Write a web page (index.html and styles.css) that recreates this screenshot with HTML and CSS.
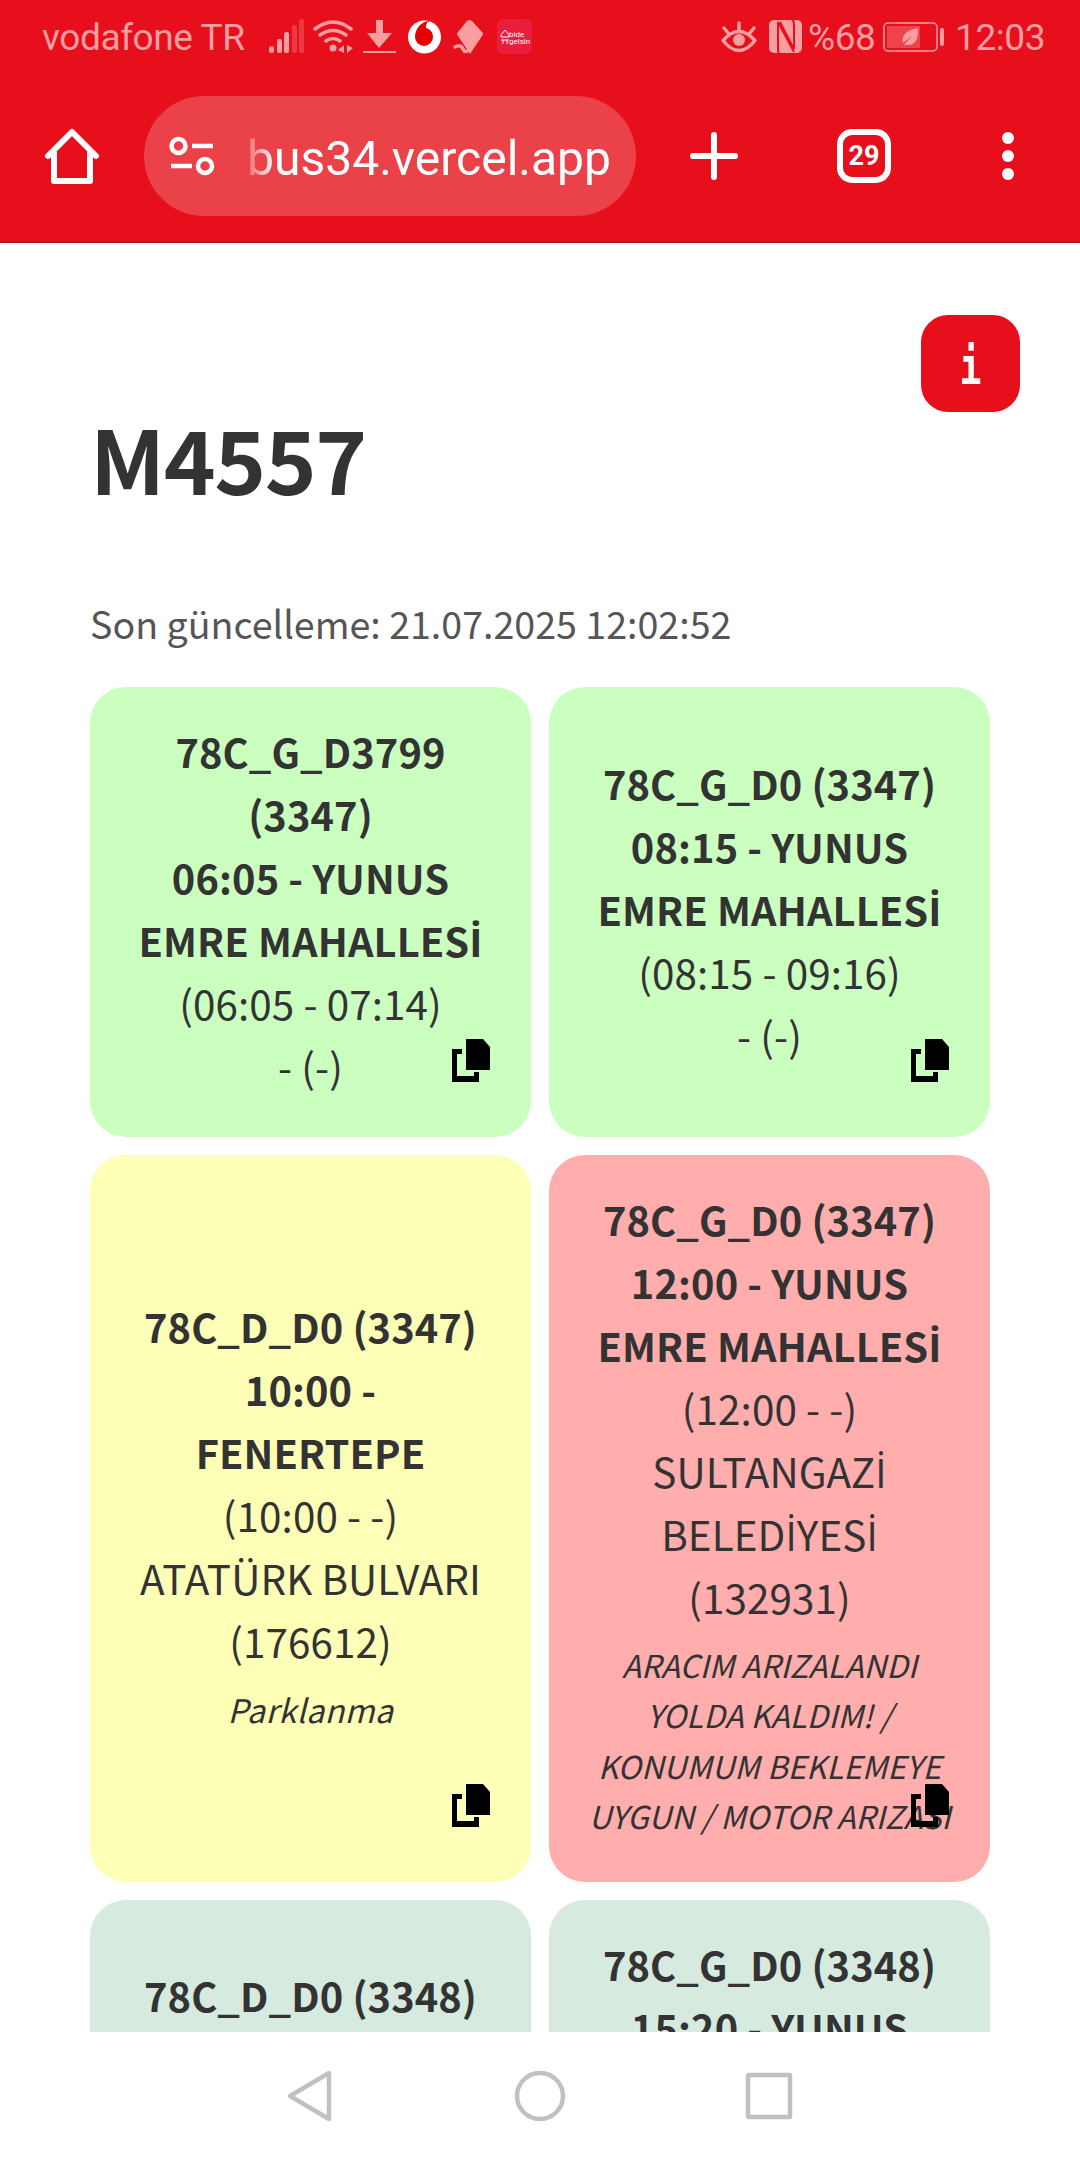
FILE: index.html
```html
<!DOCTYPE html>
<html lang="tr">
<head>
  <meta charset="UTF-8">
  <meta name="viewport" content="width=device-width, initial-scale=1.0">
  <title>M4557</title>
  <link rel="stylesheet" href="styles.css">
</head>
<body>
  <svg width="0" height="0" class="sprite">
    <symbol id="copy" viewBox="0 0 38 44">
      <path d="M14 0h17l7 8v23H14z"/>
      <path d="M0 10h10v5H5v22h17v-4h5v10H0z"/>
    </symbol>
  </svg>

  <div class="status-bar">
    <span class="carrier">vodafone TR</span>
    <svg class="status-icons" width="266" height="40" viewBox="266 17 266 40">
      <g fill="#f99ea1">
        <rect x="269" y="46" width="5" height="7" rx="2.5"/>
        <rect x="277" y="39" width="5" height="14" rx="2"/>
        <rect x="284" y="32" width="5" height="21" rx="2"/>
        <rect x="292" y="25" width="5" height="28" rx="2" opacity=".3"/>
        <rect x="299" y="19" width="5" height="34" rx="2" opacity=".3"/>
        <circle cx="333" cy="48" r="3.500"/>
        <path d="M344 45v8l-6-3zM347 45v8l6-5z"/>
        <path d="M376 20h7v13h9l-13 15-12-15h9z"/>
        <rect x="363" y="51" width="33" height="2"/>
        <path d="M469 20q2 0 3 1l10 11q2 2 0 4l-12 18-12-18q-2-2 0-4l9-11z"/>
      </g>
      <g fill="none" stroke="#f99ea1" stroke-width="3.500" stroke-linecap="round">
        <path d="M315 29q18-14 36 0M320 35q13-9 26 0M326 41q7-5 14 0"/>
        <path d="M455 47q6-3 8 2t8 0"/>
      </g>
      <circle cx="424.500" cy="37" r="16.500" fill="#fff"/>
      <path d="M430 21c-9 0-15 8-15 16a9 9 0 0 0 18 0c0-5-3-8-7-9 0-4 1-6 4-7z" fill="#e60000"/>
      <rect x="497" y="19" width="35" height="35" rx="6" fill="#ea1d3c"/>
      <text x="509" y="37" class="app-name">bide</text>
      <text x="509" y="44" class="app-name">gelsin</text>
      <path d="M501 35l4-5 4 5v2h-8zM501 40h8M503 40v4M507 40v4" fill="none" stroke="#fff"/>
    </svg>
    <svg class="right-icons" width="84" height="40" viewBox="720 17 84 40">
      <path d="M723 40.500q16-18 32 0-16 20-32 0zM739 31v-8M729 34l-5-6M749 34l5-6" fill="none" stroke="#f99ea1" stroke-width="3.500" stroke-linecap="round" stroke-linejoin="round"/>
      <circle cx="739" cy="40" r="6" fill="#f99ea1"/>
      <rect x="769" y="20" width="33" height="33" rx="5" fill="#f99ea1"/>
      <path d="M779 54q-1-2-1-5V22l16 30M792 19q2 2 2 6v24L780 22" fill="none" stroke="#e60f1b" stroke-width="2"/>
    </svg>
    <span class="percent">%68</span>
    <svg class="battery" width="62" height="32" viewBox="0 0 62 32">
      <rect x="1" y="2" width="53" height="28" rx="4" fill="none" stroke="#f99ea1" stroke-width="1.500"/>
      <rect x="4" y="5" width="33" height="22" fill="#ee434b"/>
      <path d="M35 7q1 17-10 17h-4l8-9-9 7q-2-6 4-11 4-3 11-4z" fill="#f99ea1"/>
      <rect x="57" y="7" width="4" height="18" rx="2" fill="#f99ea1"/>
    </svg>
    <span class="clock">12:03</span>
  </div>

  <div class="browser-bar">
    <svg class="home" width="56" height="60" viewBox="0 0 56 60" fill="none" stroke="#fff" stroke-width="6" stroke-linejoin="round" stroke-linecap="round">
      <path d="M4 30L28 6l24 24M10 27v28h36V27"/>
    </svg>
    <div class="address">
      <svg width="46" height="40" viewBox="0 0 46 40" fill="none" stroke="#fff" stroke-width="4.500">
        <circle cx="9.500" cy="10" r="7"/>
        <circle cx="36" cy="30" r="7"/>
        <path d="M23 10h21M2 30h21"/>
      </svg>
      <div class="url">bus34.vercel.app</div>
    </div>
    <svg class="plus" width="50" height="50" viewBox="0 0 50 50" stroke="#fff" stroke-width="6" stroke-linecap="round">
      <path d="M25 4v42M4 25h42"/>
    </svg>
    <div class="tabs">29</div>
    <svg class="more" width="12" height="50" viewBox="0 0 12 50" fill="#fff">
      <circle cx="6" cy="7" r="6"/>
      <circle cx="6" cy="25" r="6"/>
      <circle cx="6" cy="43" r="6"/>
    </svg>
  </div>

  <main class="page">
    <button class="info"><span>i</span></button>
    <h1>M4557</h1>
    <p class="updated">Son güncelleme: 21.07.2025 12:02:52</p>

    <div class="grid">
      <div class="card done">
        <b>78C_G_D3799<br>(3347)<br>06:05 - YUNUS<br>EMRE MAHALLES<span class="tr">İ</span></b>
        <span>(06:05 - 07:14)</span>
        <span>- (-)</span>
        <svg class="copy"><use href="#copy"/></svg>
      </div>
      <div class="card done">
        <b>78C_G_D0 (3347)<br>08:15 - YUNUS<br>EMRE MAHALLES<span class="tr">İ</span></b>
        <span>(08:15 - 09:16)</span>
        <span>- (-)</span>
        <svg class="copy"><use href="#copy"/></svg>
      </div>
      <div class="card active">
        <b>78C_D_D0 (3347)<br>10:00 -<br>FENERTEPE</b>
        <span>(10:00 - -)</span>
        <span>ATATÜRK BULVARI<br>(176612)</span>
        <i>Parklanma</i>
        <svg class="copy"><use href="#copy"/></svg>
      </div>
      <div class="card cancelled">
        <b>78C_G_D0 (3347)<br>12:00 - YUNUS<br>EMRE MAHALLES<span class="tr">İ</span></b>
        <span>(12:00 - -)</span>
        <span>SULTANGAZ<span class="tr">İ</span><br>BELED<span class="tr">İ</span>YES<span class="tr">İ</span><br>(132931)</span>
        <i>ARACIM ARIZALANDI<br>YOLDA KALDIM! /<br>KONUMUM BEKLEMEYE<br>UYGUN / MOTOR ARIZASI</i>
        <svg class="copy"><use href="#copy"/></svg>
      </div>
      <div class="card waiting">
        <b>78C_D_D0 (3348)</b>
      </div>
      <div class="card waiting">
        <b>78C_G_D0 (3348)<br>15:20 - YUNUS</b>
      </div>
    </div>
  </main>

  <nav class="nav-bar">
    <svg width="48" height="56" viewBox="0 0 48 56"><path d="M43 5v46L4 28z"/></svg>
    <svg width="54" height="54" viewBox="0 0 54 54"><circle cx="27" cy="27" r="23"/></svg>
    <svg width="48" height="50" viewBox="0 0 48 50"><rect x="3" y="4" width="42" height="42" rx="1"/></svg>
  </nav>
</body>
</html>
```
FILE: styles.css
```css
* {
  box-sizing: border-box;
}

body {
  margin: 0;
  height: 2160px;
  overflow: hidden;
  display: flex;
  flex-direction: column;
  background: #fff;
  color: #333;
  font-family: "Noto Sans CJK JP", "Noto Sans", sans-serif;
}

svg {
  display: block;
  flex: none;
}

.sprite {
  position: absolute;
}

.status-bar {
  height: 74px;
  flex: none;
  display: flex;
  align-items: center;
  padding-left: 42px;
  background: #e60f1b;
  color: #f99ea1;
  font: 37px/74px Roboto, sans-serif;
  letter-spacing: -0.4px;
}

.carrier {
  flex: none;
  width: 224px;
  padding-top: 2px;
  white-space: nowrap;
}

.app-name {
  font: 8px Roboto, sans-serif;
  letter-spacing: 0;
  fill: #fff;
}

.right-icons {
  margin-left: 188px;
}

.percent {
  flex: none;
  width: 79px;
  padding: 2px 0 0 4px;
}

.battery {
  margin-bottom: 1px;
}

.clock {
  margin-left: 10px;
  padding-top: 2px;
}

.browser-bar {
  height: 169px;
  flex: none;
  display: flex;
  align-items: center;
  padding: 0 0 3px 44px;
  background: #e60f1b;
  border-bottom: 2px solid #b5141c;
}

.address {
  width: 492px;
  height: 120px;
  margin-left: 44px;
  padding: 0 25px;
  display: flex;
  align-items: center;
  border-radius: 60px;
  background: #eb4149;
}

.url {
  flex: 1;
  margin-left: 24px;
  padding-top: 5px;
  color: #fff;
  font: 48px/70px Roboto, sans-serif;
  text-align: right;
  white-space: nowrap;
  -webkit-mask-image: linear-gradient(to right, transparent, #000 36px);
  mask-image: linear-gradient(to right, transparent, #000 36px);
}

.plus {
  margin-left: 53px;
}

.tabs {
  width: 54px;
  height: 54px;
  margin-left: 98px;
  border: 6px solid #fff;
  border-radius: 15px;
  color: #fff;
  font: bold 27px/43px Roboto, sans-serif;
  text-align: center;
}

.more {
  margin-left: 111px;
}

.page {
  flex: 1;
  min-height: 0;
  overflow: hidden;
  position: relative;
  padding: 0 90px;
}

.info {
  position: absolute;
  top: 72px;
  right: 60px;
  width: 99px;
  height: 97px;
  padding: 5px 0 0;
  border: 0;
  border-radius: 27px;
  background: #e60f1b;
  color: #fff;
  font: bold 52px/92px "DejaVu Sans Mono", monospace;
}

.info span {
  display: block;
  transform: scaleX(0.7);
}

h1 {
  margin: 160px 0 0;
  font-size: 88px;
  line-height: 108px;
  letter-spacing: -1.4px;
}

.updated {
  margin: 80px 0 0;
  color: #555;
  font-size: 37.6px;
  line-height: 63px;
}

.grid {
  margin-top: 33px;
  display: grid;
  grid-template-columns: 1fr 1fr;
  gap: 18px;
}

.card {
  position: relative;
  padding: 32px 30px 40px;
  display: flex;
  flex-direction: column;
  justify-content: center;
  border-radius: 36px;
  font-size: 39.8px;
  line-height: 63px;
  letter-spacing: 0.1px;
  text-align: center;
  white-space: nowrap;
}

.card > span {
  font-size: 40.4px;
}

.card i {
  margin-top: 12px;
  font-size: 31.4px;
  line-height: 50.4px;
  letter-spacing: 0;
}

/* dotted capital I is missing from the main font */
.tr {
  font-family: "Open Sans", "Noto Sans", sans-serif;
  line-height: 1;
}

.done {
  background: #caffbf;
}

.active {
  background: #fdffb6;
}

.active i {
  font-size: 32.4px;
  letter-spacing: 0.3px;
}

.cancelled {
  background: #ffadad;
}

.waiting {
  background: #d6eadf;
}

.copy {
  position: absolute;
  right: 41px;
  bottom: 54px;
  width: 38px;
  height: 44px;
}

.nav-bar {
  height: 128px;
  flex: none;
  display: flex;
  align-items: center;
  justify-content: space-between;
  padding: 0 287px 0 286px;
  background: #fff;
  fill: none;
  stroke: #c1c1c1;
  stroke-width: 4.5;
  stroke-linejoin: round;
}
```
